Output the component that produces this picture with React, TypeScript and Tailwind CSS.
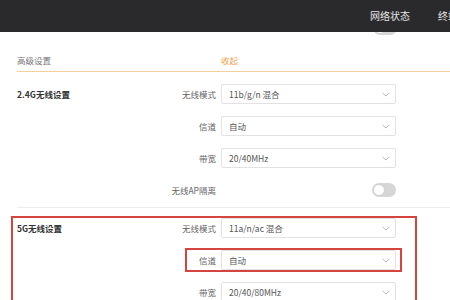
import React from 'react'

type Row = { label: string; value?: string; toggle?: boolean; mark?: boolean }

const WIFI_24: ReadonlyArray<Row> = [
  { label: '无线模式', value: '11b/g/n 混合' },
  { label: '信道', value: '自动' },
  { label: '带宽', value: '20/40MHz' },
  { label: '无线AP隔离', toggle: true },
]

const WIFI_5: ReadonlyArray<Row> = [
  { label: '无线模式', value: '11a/n/ac 混合' },
  { label: '信道', value: '自动', mark: true },
  { label: '带宽', value: '20/40/80MHz' },
]

function Chevron() {
  return (
    <svg width="8" height="5" viewBox="0 0 8 5" className="shrink-0">
      <polyline points="0.5,0.8 4,4 7.5,0.8" fill="none" stroke="#b5b5b5" strokeWidth="0.9" />
    </svg>
  )
}

function Toggle() {
  return (
    <div className="flex h-[14px] w-[24px] items-center rounded-full bg-[#d6d6d6] px-[1px]">
      <div className="h-[12px] w-[12px] rounded-full border border-[#d0d0d0] bg-white" />
    </div>
  )
}

function Select({ value }: { value: string }) {
  return (
    <div className="flex h-[20px] w-[175px] items-center justify-between rounded-[2px] border border-[#e2e2e2] bg-white pl-[7px] pr-[5px] text-[#555]">
      <span>{value}</span>
      <Chevron />
    </div>
  )
}

function Section({ title, rows }: { title: string; rows: ReadonlyArray<Row> }) {
  return (
    <div className="flex">
      <div className="flex h-[20px] w-[110px] shrink-0 items-center font-bold text-[#333]">{title}</div>
      <div className="flex flex-col gap-[12px]">
        {rows.map((r) => (
          <div key={r.label} className="relative flex h-[20px] items-center">
            <div className="w-[94px] pr-[5px] text-right text-[#666]">{r.label}</div>
            {r.toggle ? (
              <div className="flex w-[175px] justify-end">
                <Toggle />
              </div>
            ) : (
              <Select value={r.value ?? ''} />
            )}
            {r.mark && (
              <div className="absolute -top-[2px] -bottom-[2px] left-[58px] -right-[6px] border-2 border-[#d4453f]" />
            )}
          </div>
        ))}
      </div>
    </div>
  )
}

export default function App() {
  return (
    <div
      className="h-[300px] w-[450px] overflow-hidden bg-white text-[8.5px] leading-none"
      style={{ fontFamily: '"Noto Sans CJK SC", "Noto Sans", sans-serif' }}
    >
      <header className="relative z-10 flex h-[32px] items-center overflow-hidden bg-[#2a2a2c]">
        <nav className="ml-auto mr-[-28px] flex gap-[28px] text-[10px] text-[#e4e4e4]">
          <span>网络状态</span>
          <span>终端设置</span>
        </nav>
      </header>

      <div className="flex justify-end pr-[53px]">
        <div className="mt-[-11px]">
          <Toggle />
        </div>
      </div>

      <div className="pl-[17px]">
        <div className="mt-[15px] flex h-[22px] items-center border-b border-[#f3cf9c]">
          <span className="w-[204px] text-[#777]">高级设置</span>
          <span className="text-[#f0a04e]">收起</span>
        </div>

        <div className="mt-[12px] border-b border-[#ececec] pb-[7px]">
          <Section title="2.4G无线设置" rows={WIFI_24} />
        </div>
      </div>

      <div className="ml-[11px] mt-[8px] w-[406px] border-2 border-[#d4453f] pl-[4px] pb-[10px]">
        <Section title="5G无线设置" rows={WIFI_5} />
      </div>
    </div>
  )
}
